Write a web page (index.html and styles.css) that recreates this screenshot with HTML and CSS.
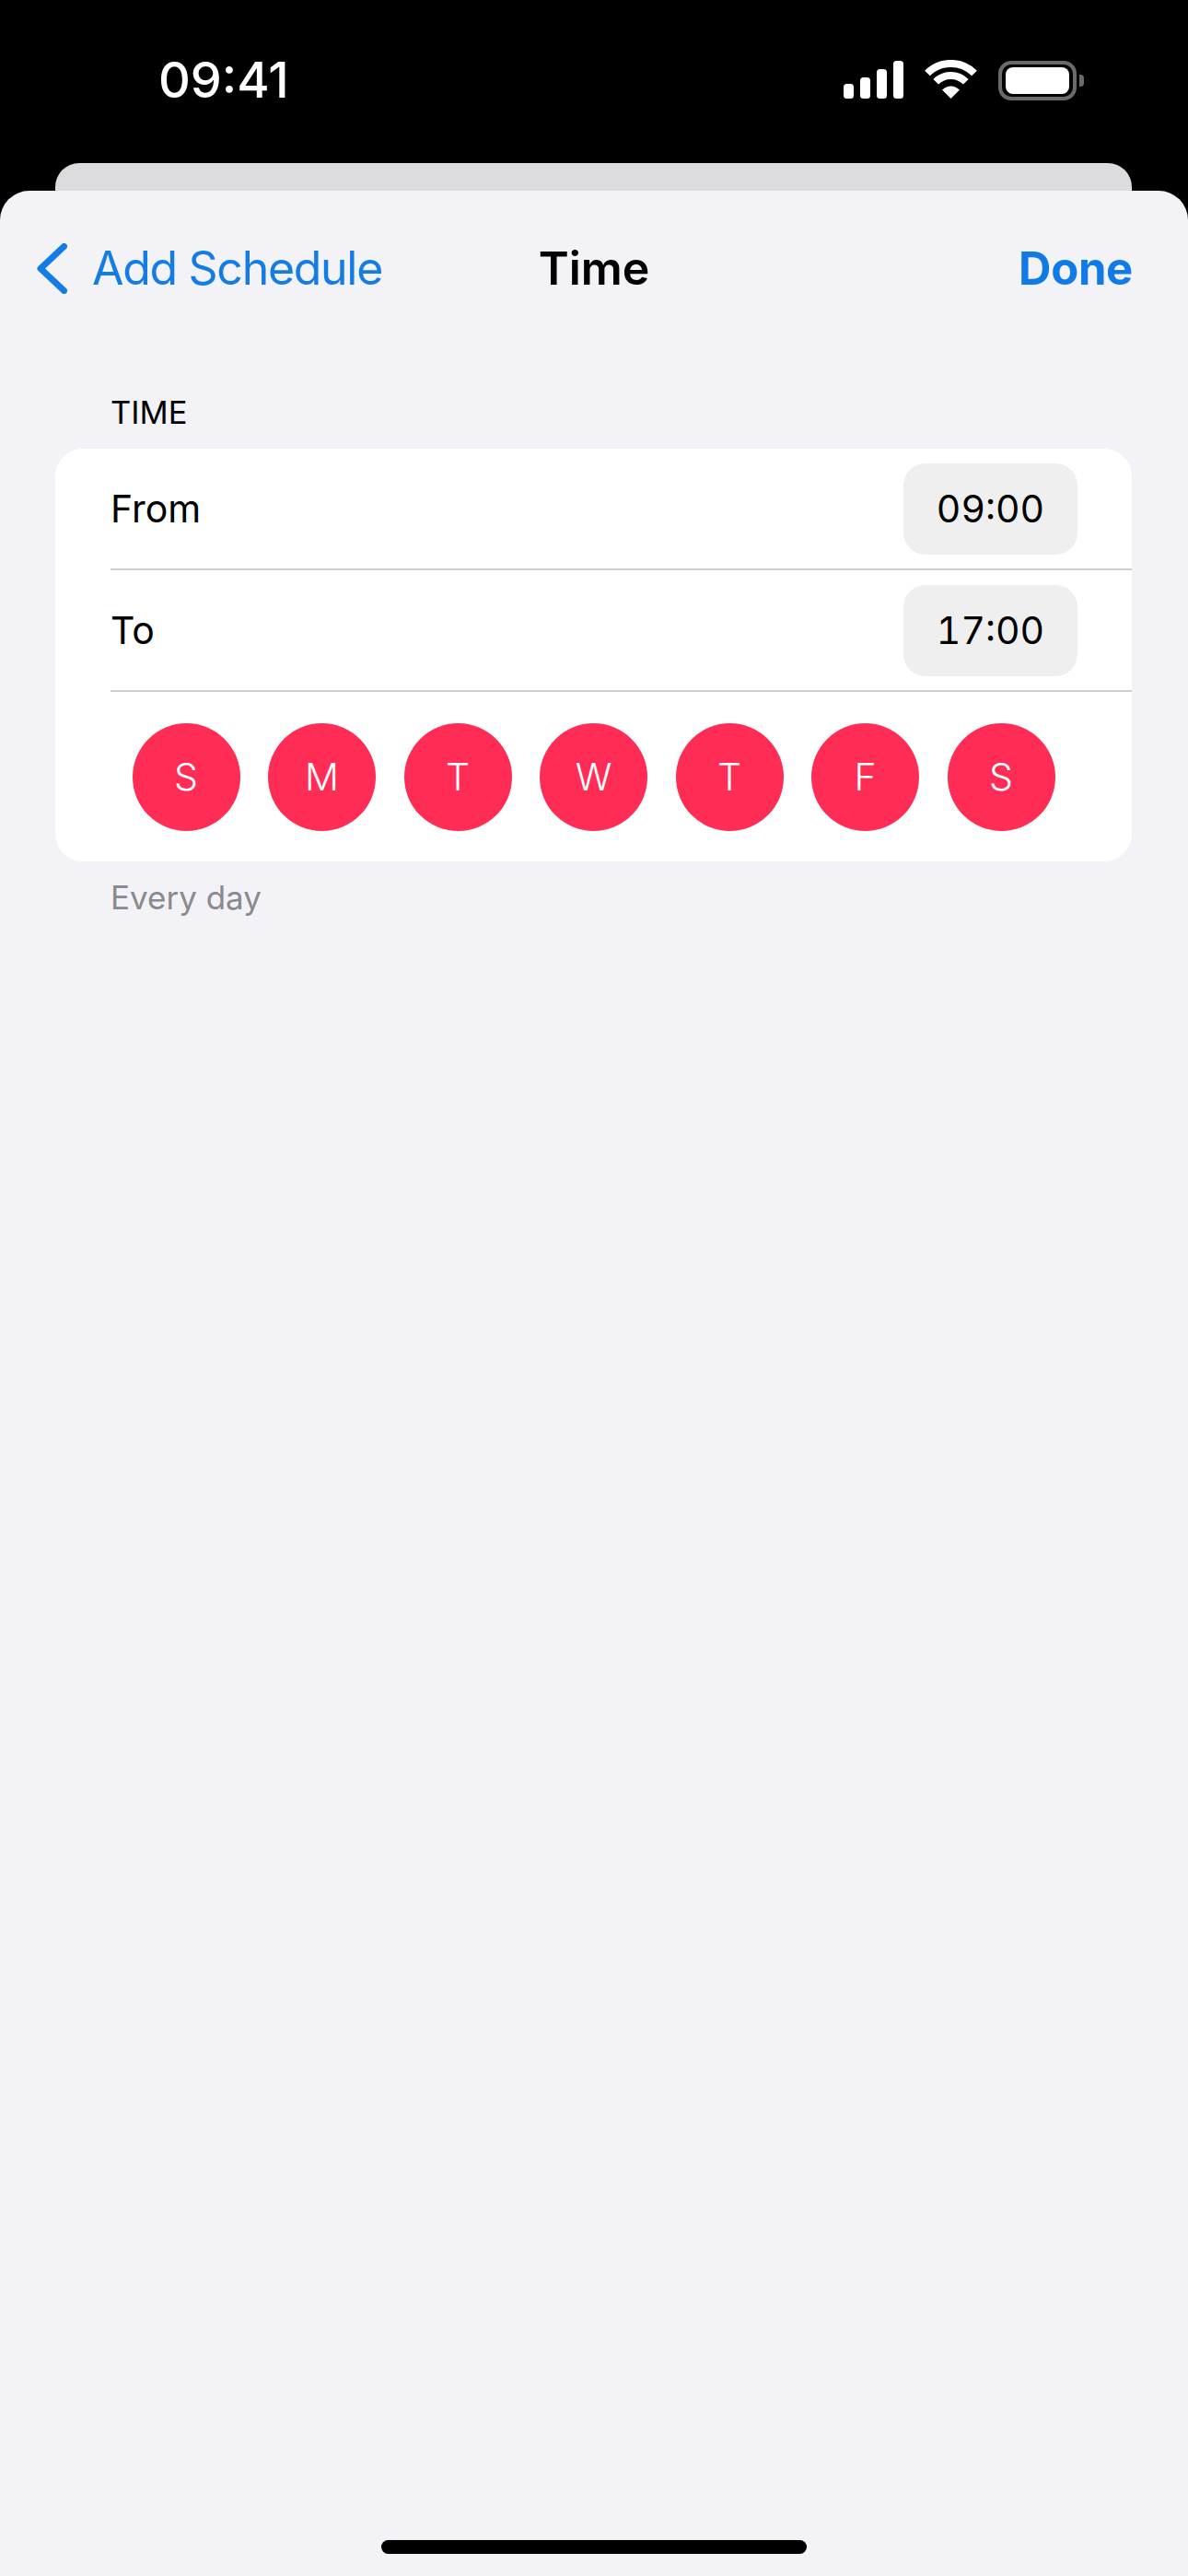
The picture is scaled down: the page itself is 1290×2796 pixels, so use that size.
FILE: index.html
```html
<!DOCTYPE html>
<html lang="en">
<head>
  <meta charset="UTF-8" />
  <meta name="viewport" content="width=device-width, initial-scale=1.0" />
  <title>Time</title>
  <link rel="stylesheet" href="styles.css">
</head>
<body>
  <div id="phone">
    <!-- Status bar -->
    <div class="status">
      <span class="clock">09:41</span>
      <div class="status-icons">
        <svg class="signal" width="65" height="41" viewBox="0 0 65 41" fill="#fff">
          <rect x="0" y="25" width="11" height="16" rx="3.5" />
          <rect x="18" y="18" width="11" height="23" rx="3.5" />
          <rect x="36" y="9" width="11" height="32" rx="3.5" />
          <rect x="54" y="0" width="11" height="41" rx="3.5" />
        </svg>
        <svg class="wifi" width="57" height="42" viewBox="0 0 57 42">
          <path d="M3 14.5A36 36 0 0 1 54 14.5" fill="none" stroke="#fff" stroke-width="8" />
          <path d="M12.2 23.7A23 23 0 0 1 44.8 23.7" fill="none" stroke="#fff" stroke-width="8" />
          <path d="M28.5 42L19 32.5Q28.5 24.5 38 32.5Z" fill="#fff" />
        </svg>
        <div class="battery">
          <div class="battery-body"><div class="battery-fill"></div></div>
          <div class="battery-nub"></div>
        </div>
      </div>
    </div>

    <div class="back-sheet"></div>

    <div class="sheet">
      <!-- Nav -->
      <div class="nav">
        <div class="nav-back">
          <svg width="33" height="55" viewBox="0 0 33 55">
            <path d="M29.5 3.5L4 27.5L29.5 51.5" fill="none" stroke="#147ce5" stroke-width="7" stroke-linecap="round" stroke-linejoin="round" />
          </svg>
          <span>Add Schedule</span>
        </div>
        <div class="nav-title">Time</div>
        <div class="nav-done">Done</div>
      </div>

      <!-- Time section -->
      <div class="section-head">TIME</div>
      <div class="card">
        <div class="row">
          <span class="row-label">From</span>
          <span class="pill">09:00</span>
        </div>
        <div class="row">
          <span class="row-label">To</span>
          <span class="pill">17:00</span>
        </div>
        <div class="days">
          <span class="day">S</span>
          <span class="day">M</span>
          <span class="day">T</span>
          <span class="day">W</span>
          <span class="day">T</span>
          <span class="day">F</span>
          <span class="day">S</span>
        </div>
      </div>
      <div class="section-foot">Every day</div>

      <div class="home-bar"></div>
    </div>
  </div>
</body>
</html>
```

FILE: styles.css
```css
* {
  box-sizing: border-box;
}

body {
  margin: 0;
  background-color: #000;
  font-family: Inter, "Liberation Sans", sans-serif;
  color: #000;
}

#phone {
  width: 1290px;
  height: 2796px;
  display: flex;
  flex-direction: column;
  overflow: hidden;
}

/* Status bar */
.status {
  height: 177px;
  display: flex;
  align-items: flex-start;
  justify-content: space-between;
  padding: 0 113px 0 172px;
}

.clock {
  margin-top: 55px;
  font-size: 54px;
  line-height: 64px;
  font-weight: 500;
  color: #fff;
}

.status-icons {
  display: flex;
  align-items: flex-start;
  margin-top: 65px;
}

.signal {
  margin-top: 1px;
  margin-right: 23px;
}

.wifi {
  margin-right: 23px;
}

.battery {
  display: flex;
  align-items: center;
  margin-top: 1px;
}

.battery-body {
  width: 85px;
  height: 43px;
  padding: 3px 4px;
  border: 4px solid #6a6a6a;
  border-radius: 14px;
}

.battery-fill {
  width: 100%;
  height: 100%;
  background-color: #fff;
  border-radius: 8px;
}

.battery-nub {
  width: 5px;
  height: 13px;
  margin-left: 3px;
  background-color: #6a6a6a;
  border-radius: 0 4px 4px 0;
}

/* Sheets */
.back-sheet {
  height: 30px;
  margin: 0 61px 0 60px;
  background-color: #dcdcdf;
  border-radius: 26px 26px 0 0;
}

.sheet {
  flex: 1;
  display: flex;
  flex-direction: column;
  background-color: #f2f2f7;
  border-radius: 32px 32px 0 0;
}

/* Nav */
.nav {
  display: grid;
  grid-template-columns: 1fr auto 1fr;
  align-items: center;
  height: 100px;
  margin-top: 34px;
  padding: 0 40px;
}

.nav-back {
  display: flex;
  align-items: center;
  gap: 27px;
  font-size: 50px;
  letter-spacing: -1.3px;
  color: #147ce5;
}

.nav-title {
  font-size: 50px;
  font-weight: 600;
}

.nav-done {
  margin-right: 20px;
  text-align: right;
  font-size: 49px;
  font-weight: 700;
  letter-spacing: -0.3px;
  color: #107ae6;
}

/* Time section */
.section-head {
  margin: 85px 0 0 120px;
  font-size: 34.5px;
  line-height: 44px;
}

.card {
  margin: 17px 61px 0 60px;
  background-color: #fff;
  border-radius: 30px;
}

.row {
  height: 132px;
  margin-left: 60px;
  display: flex;
  align-items: center;
  justify-content: space-between;
  padding-right: 59px;
  border-bottom: 2px solid #cfcfd1;
}

.row-label {
  font-size: 41px;
}

.pill {
  width: 189px;
  height: 99px;
  display: flex;
  align-items: center;
  justify-content: center;
  font-size: 41px;
  font-variant-numeric: tabular-nums;
  background-color: #efeff0;
  border-radius: 24px;
}

.days {
  height: 184px;
  display: flex;
  align-items: center;
  justify-content: center;
  gap: 30.5px;
}

.day {
  width: 117px;
  height: 117px;
  display: flex;
  align-items: center;
  justify-content: center;
  font-size: 41px;
  font-weight: 300;
  color: #fff;
  background-color: #ff2d55;
  border-radius: 50%;
}

.section-foot {
  margin: 17px 0 0 120px;
  font-size: 35px;
  line-height: 44px;
  color: #8a8a8e;
}

.home-bar {
  width: 462px;
  height: 15px;
  margin: auto auto 24px;
  background-color: #000;
  border-radius: 8px;
}
```
